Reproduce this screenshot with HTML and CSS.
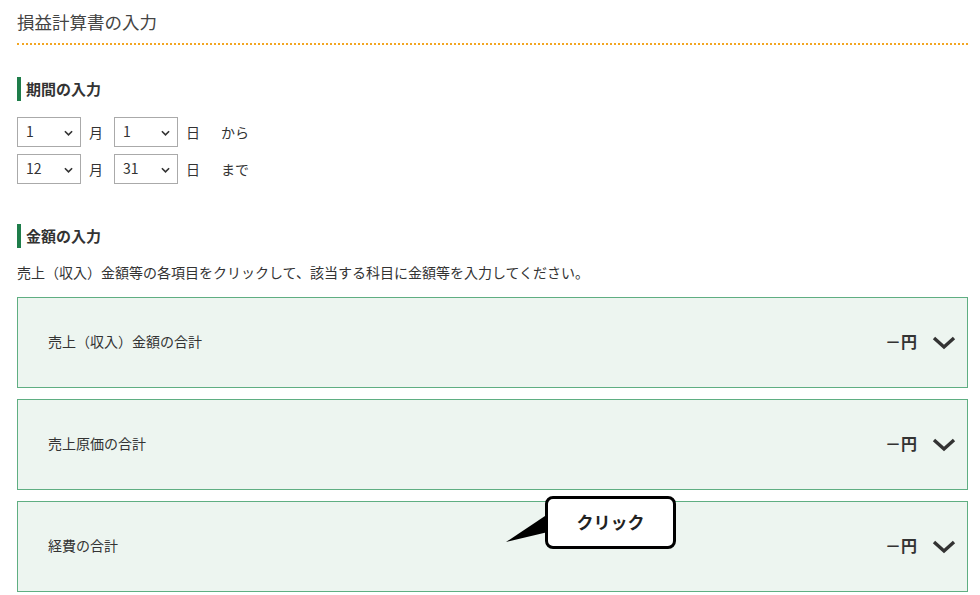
FILE: index.html
```html
<!DOCTYPE html>
<html lang="ja">
<head>
<meta charset="utf-8">
<title>損益計算書の入力</title>
<link rel="stylesheet" href="styles.css">
</head>
<body>
<main class="page">
  <h1 class="page-title">損益計算書の入力</h1>

  <section class="period">
    <h2 class="sec-head">期間の入力</h2>
    <div class="date-row">
      <div class="sel"><select><option>1</option></select><svg class="sel-arrow" viewBox="0 0 10 6"><path d="M1 1l4 4 4-4" fill="none" stroke="#333" stroke-width="1.8"/></svg></div>
      <span class="unit">月</span>
      <div class="sel"><select><option>1</option></select><svg class="sel-arrow" viewBox="0 0 10 6"><path d="M1 1l4 4 4-4" fill="none" stroke="#333" stroke-width="1.8"/></svg></div>
      <span class="unit">日</span>
      <span class="word">から</span>
    </div>
    <div class="date-row">
      <div class="sel"><select><option>12</option></select><svg class="sel-arrow" viewBox="0 0 10 6"><path d="M1 1l4 4 4-4" fill="none" stroke="#333" stroke-width="1.8"/></svg></div>
      <span class="unit">月</span>
      <div class="sel"><select><option>31</option></select><svg class="sel-arrow" viewBox="0 0 10 6"><path d="M1 1l4 4 4-4" fill="none" stroke="#333" stroke-width="1.8"/></svg></div>
      <span class="unit">日</span>
      <span class="word">まで</span>
    </div>
  </section>

  <section class="amount">
    <h2 class="sec-head">金額の入力</h2>
    <p class="desc">売上（収入）金額等の各項目をクリックして、該当する科目に金額等を入力してください。</p>
    <div class="acc-list">
      <div class="acc">
        <span class="acc-label">売上（収入）金額の合計</span>
        <span class="acc-val">－円</span>
        <svg class="chev" viewBox="0 0 24 14"><path d="M2 2l10 9 10-9" fill="none" stroke="#333" stroke-width="3.4"/></svg>
      </div>
      <div class="acc">
        <span class="acc-label">売上原価の合計</span>
        <span class="acc-val">－円</span>
        <svg class="chev" viewBox="0 0 24 14"><path d="M2 2l10 9 10-9" fill="none" stroke="#333" stroke-width="3.4"/></svg>
      </div>
      <div class="acc acc-last">
        <span class="acc-label">経費の合計</span>
        <span class="acc-val">－円</span>
        <svg class="chev" viewBox="0 0 24 14"><path d="M2 2l10 9 10-9" fill="none" stroke="#333" stroke-width="3.4"/></svg>
        <div class="callout">
          <svg class="callout-tail" viewBox="0 0 42 32"><path d="M42 2L0 30 42 20z" fill="#000"/></svg>
          <span>クリック</span>
        </div>
      </div>
    </div>
  </section>
</main>
</body>
</html>
```
FILE: styles.css
```css
* { box-sizing: border-box; }
html, body { margin: 0; padding: 0; background: #fff; }
body {
  font-family: "Noto Sans CJK JP", "Noto Sans", sans-serif;
  color: #333;
  width: 980px;
  height: 595px;
  overflow: hidden;
}
.page { padding: 0 12px 0 17px; }

.page-title {
  margin: 0;
  padding-top: 9px;
  height: 45px;
  font-size: 17.5px;
  font-weight: normal;
  line-height: 26px;
  color: #444;
  border-bottom: 2px dotted #f2a623;
}

.sec-head {
  margin: 0;
  border-left: 4px solid #1e7d4a;
  padding-left: 5px;
  font-size: 15px;
  font-weight: bold;
  line-height: 24px;
  color: #333;
}
.period { padding-top: 32px; }
.period .sec-head { margin-bottom: 16px; }

.date-row {
  display: flex;
  align-items: center;
  height: 30px;
  margin-bottom: 7px;
  font-size: 14px;
}
.sel {
  position: relative;
  width: 64px;
  height: 30px;
}
.sel select {
  appearance: none;
  -webkit-appearance: none;
  width: 100%;
  height: 100%;
  border: 1px solid #aaa;
  background: #fff;
  border-radius: 0;
  padding: 0 0 3px 8px;
  font-family: "Noto Sans CJK JP", sans-serif;
  font-size: 14px;
  color: #333;
}
.sel-arrow {
  position: absolute;
  right: 8px;
  top: 13px;
  width: 9px;
  height: 6px;
  pointer-events: none;
}
.unit { width: 33px; padding-left: 8px; }
.word { padding-left: 10px; }

.amount { padding-top: 33px; }
.desc {
  margin: 14px 0 0;
  font-size: 14px;
  line-height: 20px;
  color: #333;
}
.acc-list {
  margin-top: 15px;
  display: flex;
  flex-direction: column;
  gap: 11px;
}
.acc {
  position: relative;
  display: flex;
  align-items: center;
  height: 91px;
  border: 1px solid #5fae82;
  background: #edf5f0;
  padding: 0 11px 3px 30px;
  font-size: 14px;
}
.acc-label { flex: 1; }
.acc-val { font-weight: bold; font-size: 16px; margin-right: 15px; }
.chev { width: 24px; height: 14px; margin-top: 3px; }

.callout {
  position: absolute;
  left: 527px;
  top: -6px;
  width: 131px;
  height: 53px;
  border: 3px solid #000;
  border-radius: 8px;
  background: #fff;
  display: flex;
  align-items: center;
  justify-content: center;
  font-size: 17px;
  font-weight: bold;
  color: #222;
}
.callout span { position: relative; top: -1px; }
.callout-tail {
  position: absolute;
  left: -42px;
  top: 13px;
  width: 42px;
  height: 32px;
}
```
